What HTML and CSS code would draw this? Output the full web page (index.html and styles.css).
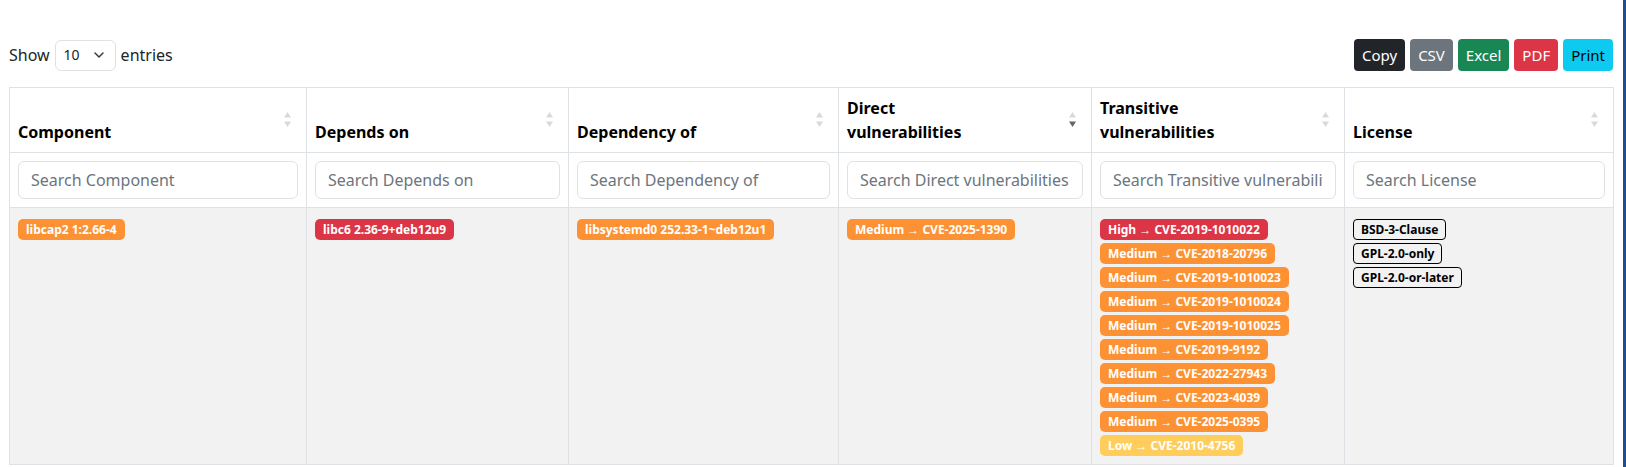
FILE: index.html
```html
<!DOCTYPE html>
<html lang="en">
<head>
<meta charset="utf-8">
<title>Components</title>
<link rel="stylesheet" href="styles.css">
</head>
<body>
<div class="page">
  <main class="content">
    <div class="toolbar">
      <div class="length">Show <span class="select">10<svg class="chev" width="12" height="8" viewBox="0 0 12 8"><path d="M2 2l4 4 4-4" fill="none" stroke="#343a40" stroke-width="1.5" stroke-linecap="round" stroke-linejoin="round"/></svg></span> entries</div>
      <div class="buttons">
        <span class="btn btn-dark">Copy</span>
        <span class="btn btn-gray">CSV</span>
        <span class="btn btn-green">Excel</span>
        <span class="btn btn-red">PDF</span>
        <span class="btn btn-cyan">Print</span>
      </div>
    </div>
    <table class="grid">
      <colgroup>
        <col class="c1"><col class="c2"><col class="c3"><col class="c4"><col class="c5"><col class="c6">
      </colgroup>
      <thead>
        <tr class="head">
          <th>Component<span class="sort"><svg width="7" height="15" viewBox="0 0 7 15"><path d="M3.5 0L7 5.5H0z" fill="#000" fill-opacity=".15"/><path d="M3.5 15L7 9.5H0z" fill="#000" fill-opacity=".15"/></svg></span></th>
          <th>Depends on<span class="sort"><svg width="7" height="15" viewBox="0 0 7 15"><path d="M3.5 0L7 5.5H0z" fill="#000" fill-opacity=".15"/><path d="M3.5 15L7 9.5H0z" fill="#000" fill-opacity=".15"/></svg></span></th>
          <th>Dependency of<span class="sort"><svg width="7" height="15" viewBox="0 0 7 15"><path d="M3.5 0L7 5.5H0z" fill="#000" fill-opacity=".15"/><path d="M3.5 15L7 9.5H0z" fill="#000" fill-opacity=".15"/></svg></span></th>
          <th>Direct<br>vulnerabilities<span class="sort"><svg width="7" height="15" viewBox="0 0 7 15"><path d="M3.5 0L7 5.5H0z" fill="#000" fill-opacity=".15"/><path d="M3.5 15L7 9.5H0z" fill="#000" fill-opacity=".6"/></svg></span></th>
          <th>Transitive<br>vulnerabilities<span class="sort"><svg width="7" height="15" viewBox="0 0 7 15"><path d="M3.5 0L7 5.5H0z" fill="#000" fill-opacity=".15"/><path d="M3.5 15L7 9.5H0z" fill="#000" fill-opacity=".15"/></svg></span></th>
          <th>License<span class="sort"><svg width="7" height="15" viewBox="0 0 7 15"><path d="M3.5 0L7 5.5H0z" fill="#000" fill-opacity=".15"/><path d="M3.5 15L7 9.5H0z" fill="#000" fill-opacity=".15"/></svg></span></th>
        </tr>
        <tr class="filters">
          <th><input class="search" type="text" placeholder="Search Component"></th>
          <th><input class="search" type="text" placeholder="Search Depends on"></th>
          <th><input class="search" type="text" placeholder="Search Dependency of"></th>
          <th><input class="search" type="text" placeholder="Search Direct vulnerabilities"></th>
          <th><input class="search" type="text" placeholder="Search Transitive vulnerabilities"></th>
          <th><input class="search" type="text" placeholder="Search License"></th>
        </tr>
      </thead>
      <tbody>
        <tr class="odd">
          <td><span class="badge orange">libcap2 1:2.66-4</span></td>
          <td><span class="badge red">libc6 2.36-9+deb12u9</span></td>
          <td><span class="badge orange">libsystemd0 252.33-1~deb12u1</span></td>
          <td><span class="badge orange">Medium → CVE-2025-1390</span></td>
          <td>
            <span class="badge red">High → CVE-2019-1010022</span><br>
            <span class="badge orange">Medium → CVE-2018-20796</span><br>
            <span class="badge orange">Medium → CVE-2019-1010023</span><br>
            <span class="badge orange">Medium → CVE-2019-1010024</span><br>
            <span class="badge orange">Medium → CVE-2019-1010025</span><br>
            <span class="badge orange">Medium → CVE-2019-9192</span><br>
            <span class="badge orange">Medium → CVE-2022-27943</span><br>
            <span class="badge orange">Medium → CVE-2023-4039</span><br>
            <span class="badge orange">Medium → CVE-2025-0395</span><br>
            <span class="badge yellow">Low → CVE-2010-4756</span>
          </td>
          <td>
            <span class="badge outline">BSD-3-Clause</span><br>
            <span class="badge outline">GPL-2.0-only</span><br>
            <span class="badge outline">GPL-2.0-or-later</span>
          </td>
        </tr>
      </tbody>
    </table>
  </main>
  <div class="edge"></div>
</div>
</body>
</html>
```

FILE: styles.css
```css
* { box-sizing: border-box; }

html, body {
  margin: 0;
  padding: 0;
  background: #fff;
  overflow: hidden;
}

body {
  font-family: "Noto Sans", "Open Sans", sans-serif;
  font-size: 16px;
  line-height: 24px;
  color: #212529;
}

.page {
  display: flex;
  height: 467px;
}

.content {
  flex: 1;
  padding: 39px 10px 0 9px;
  min-width: 0;
}

.edge {
  width: 3px;
  background: #1d4f8f;
}

.toolbar {
  display: flex;
  justify-content: space-between;
  align-items: center;
  height: 32px;
  margin-bottom: 16px;
}

.length {
  display: flex;
  align-items: center;
  gap: 4px;
  font-size: 16px;
}

.select {
  display: inline-flex;
  align-items: center;
  justify-content: space-between;
  width: 61px;
  height: 31px;
  padding: 0 10px 0 8px;
  border: 1px solid #dee2e6;
  border-radius: 6px;
  font-size: 14px;
  color: #212529;
  margin: 0 1px;
}

.chev { display: block; }

.buttons {
  display: flex;
  gap: 5px;
}

.btn {
  display: inline-block;
  height: 32px;
  padding: 0 8px;
  font-size: 15px;
  line-height: 32px;
  border-radius: 4px;
  color: #fff;
}

.btn-dark { background: #212529; }
.btn-gray { background: #6c757d; }
.btn-green { background: #198754; }
.btn-red { background: #dc3545; }
.btn-cyan { background: #0dcaf0; color: #000; }

.grid {
  width: 1604px;
  table-layout: fixed;
  border-collapse: collapse;
}

.c1 { width: 297px; }
.c2 { width: 262px; }
.c3 { width: 270px; }
.c4 { width: 253px; }
.c5 { width: 253px; }
.c6 { width: 269px; }

.grid th,
.grid td {
  border: 1px solid #dee2e6;
  padding: 8px;
  text-align: left;
}

.head th {
  position: relative;
  height: 64px;
  vertical-align: bottom;
  font-weight: 700;
  color: #000;
  padding-right: 30px;
}

.sort {
  position: absolute;
  right: 15px;
  top: 50%;
  margin-top: -8px;
  line-height: 0;
}

.filters th {
  font-weight: 400;
}

.search {
  display: block;
  width: 100%;
  height: 38px;
  padding: 6px 12px;
  font-family: inherit;
  font-size: 16px;
  line-height: 24px;
  color: #212529;
  border: 1px solid #dee2e6;
  border-radius: 6px;
  background: #fff;
  outline: none;
}

.search::placeholder { color: #6c757d; }

tbody tr.odd td {
  background: #f2f2f2;
  vertical-align: top;
  padding-top: 8px;
}

.badge {
  display: inline-block;
  padding: 4px 8px;
  font-size: 12px;
  font-weight: 700;
  line-height: 13px;
  border-radius: 5px;
  color: #fff;
  white-space: nowrap;
  vertical-align: baseline;
}

.orange { background: #fd9234; }
.red { background: #dc3545; }
.yellow { background: #fecd5c; }

.outline {
  background: transparent;
  color: #000;
  border: 1px solid #000;
  padding: 3px 7px;
  border-radius: 4px;
}
```
